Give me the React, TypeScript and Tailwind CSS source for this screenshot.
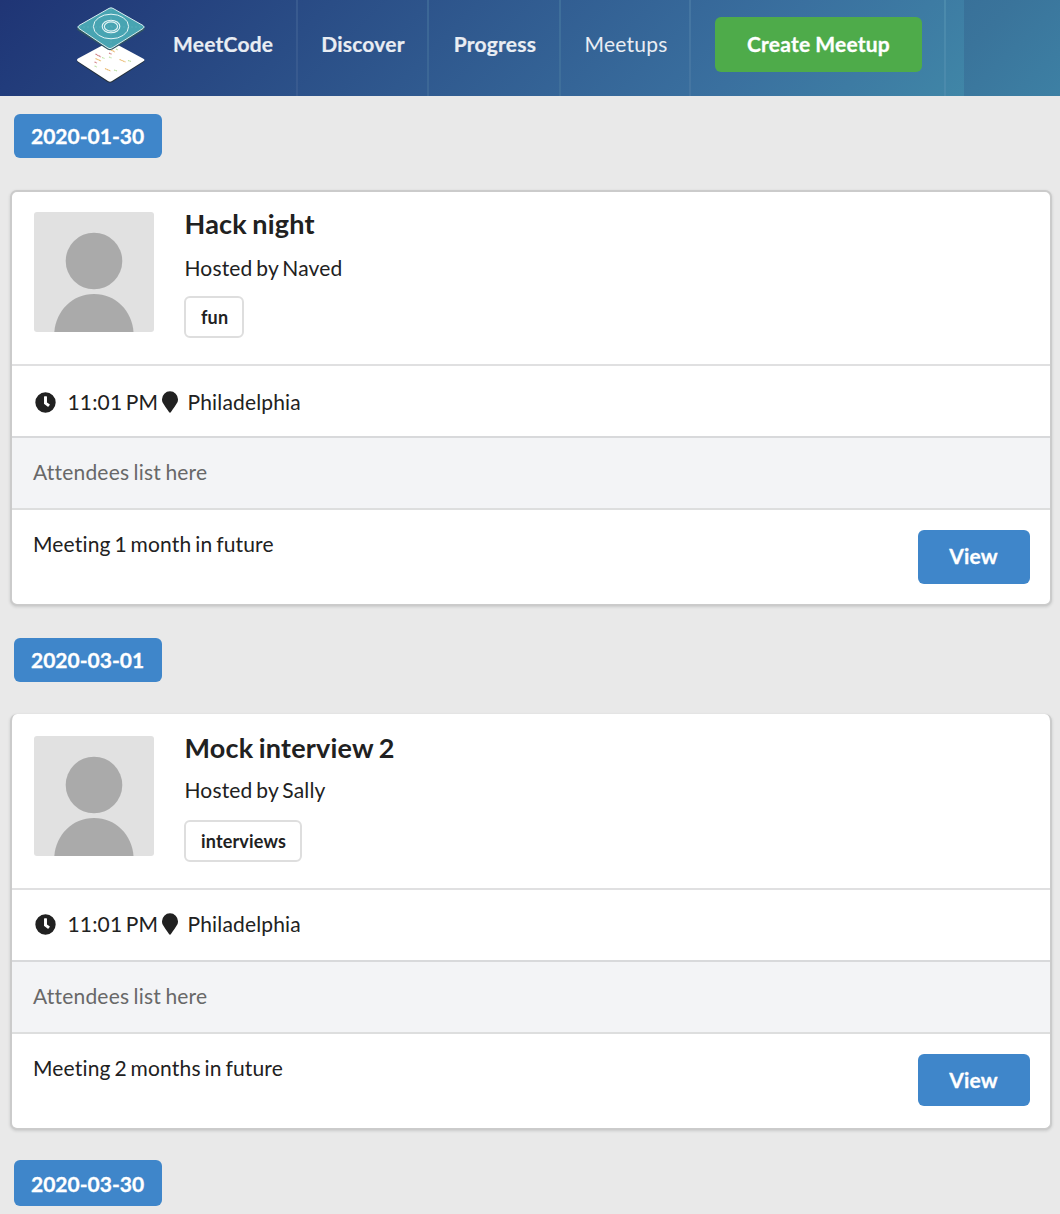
import React from "react";

type Meetup = {
  date: string;
  title: string;
  host: string;
  tag: string;
  description: string;
  cardClass: string;
  hostClass: string;
  timeClass: string;
  viewClass: string;
};

const meetups: Meetup[] = [
  {
    date: "2020-01-30",
    title: "Hack night",
    host: "Naved",
    tag: "fun",
    description: "Meeting 1 month in future",
    cardClass: "border-t-2",
    hostClass: "mt-[11px] mb-[16px]",
    timeClass: "pt-[2px]",
    viewClass: "h-[54px] pb-[2px]",
  },
  {
    date: "2020-03-01",
    title: "Mock interview 2",
    host: "Sally",
    tag: "interviews",
    description: "Meeting 2 months in future",
    cardClass: "border-t-0 pt-[2px]",
    hostClass: "mt-[9px] mb-[18px]",
    timeClass: "pb-[2px]",
    viewClass: "h-[52px]",
  },
];

function Logo() {
  return (
    <svg width="70" height="78" viewBox="0 0 70 78" fill="none">
      <path d="M34.500 34 L67 52.500 Q70 54 67 55.500 L36.500 75 Q34 76.500 31.500 75 L2 55.500 Q0 54 2 52.500Z" fill="#26323c" />
      <path d="M34.500 34 L67 51.500 Q70 53 67 54.500 L36 74 Q34 75.300 32 74 L2 54.500 Q0 53 2 51.500Z" fill="#fff" />
      <path d="M35 3 L67.500 20.500 Q70 22 67.500 23.500 L36.500 42.500 Q34 43.800 31.500 42.500 L2 23.500 Q0 22 2 20.500Z" fill="#315763" />
      <path d="M33 1.400 Q35 .2 37 1.400 L67 18.500 Q69.500 20 67 21.500 L36 41 Q34 42.300 32 41 L3 21.500 Q.5 20 3 18.500Z" fill="#48a4b2" stroke="#d9eef0" strokeWidth="1" />
      <path d="M3 20H67M35 2V41" stroke="#65b5bf" strokeWidth=".5" strokeDasharray="2 2" />
      <g stroke="#e4f5f6">
        <ellipse cx="35" cy="19.500" rx="17.600" ry="12.300" strokeWidth="1" />
        <ellipse cx="35" cy="19.500" rx="8.800" ry="6.300" strokeWidth="1.100" />
        <ellipse cx="35" cy="19.500" rx="6.600" ry="4.600" strokeWidth="1.100" />
      </g>
      <g strokeWidth="1.100" strokeDasharray="1.600 .3">
        <path d="M19.500 47l5.500 3M33 46l2.500 1.200M18.500 55l2.500 1" stroke="#ce7d83" />
        <path d="M19.500 51.500l5.500 2.500M43.500 52.500l6 2.500M29 61.500l5.500 2.500M35 43l4 2" stroke="#e8b86d" />
        <path d="M26 50.500l2.500 1M33 50l2.500 1M52 53.500l3 1M18.500 59l2.500 1M38 63l3 1M40 42l2 1" stroke="#b9df9e" />
      </g>
    </svg>
  );
}

function Avatar() {
  return (
    <svg className="h-[120px] w-[120px] shrink-0 rounded-[3px] bg-[#e1e1e1]" viewBox="0 0 120 120">
      <circle cx="60" cy="49" r="28.300" fill="#aaa" />
      <path d="M20.300 120C22 99 38 82 60 82S98 99 99.500 120Z" fill="#aaa" />
    </svg>
  );
}

function DateLabel({ children, className }: { children: React.ReactNode; className: string }) {
  return (
    <div className={`ml-[14px] flex w-[148px] items-center rounded-[6px] bg-[#3f86ca] pl-[17px] text-[21px] font-bold tracking-[0] text-white [-webkit-text-stroke:0.3px_#fff] ${className}`}>
      {children}
    </div>
  );
}

function MeetupCard({ meetup }: { meetup: Meetup }) {
  return (
    <article
      className={`mt-8 mr-[8px] ml-[10px] flex h-[416px] flex-col overflow-hidden rounded-[7px] border-x-2 border-b-2 border-[#cbcbcb] bg-white shadow-[0_1px_3px_rgba(34,36,38,0.16)] ${meetup.cardClass}`}
    >
      <div className="flex h-[172px] shrink-0 gap-[30.5px] pt-5 pl-[22px]">
        <Avatar />
        <div>
          <h2 className="h-[32px] text-[27px] leading-[23px] font-bold tracking-[0.18px] [word-spacing:-1.2px]">{meetup.title}</h2>
          <p className={`h-[25px] leading-[25px] ${meetup.hostClass}`}>Hosted by {meetup.host}</p>
          <span className="-ml-[0.5px] inline-flex h-[42px] items-center rounded-[6px] border-2 border-[#dedede] pr-[14px] pl-[15px] text-[18px] font-bold">
            {meetup.tag}
          </span>
        </div>
      </div>
      <div className={`flex h-[72px] shrink-0 items-center border-t-2 border-[#e0e0e1] pl-[23px] ${meetup.timeClass}`}>
        <svg width="21" height="21" viewBox="0 0 512 512" fill="currentColor">
          <path d="M256 8a248 248 0 1 0 0 496 248 248 0 0 0 0-496zm57.100 350.100L224.900 294a12 12 0 0 1-4.900-9.700V116a12 12 0 0 1 12-12h48a12 12 0 0 1 12 12v137.700l63.500 46.200a12 12 0 0 1 2.600 16.800l-28.200 38.800a12 12 0 0 1-16.800 2.600z" />
        </svg>
        <span className="ml-[11.5px] w-[94.5px] whitespace-nowrap [word-spacing:-2px]">11:01 PM</span>
        <svg width="16" height="22" viewBox="0 0 384 512" fill="currentColor">
          <path d="M172 502C27 291 0 269 0 192a192 192 0 0 1 384 0c0 77-27 99-172 310-10 14-31 14-40 0z" />
        </svg>
        <span className="ml-[9.5px]">Philadelphia</span>
      </div>
      <div className="flex h-[72px] shrink-0 items-center border-t-2 border-[#d8d9db] bg-[#f3f4f6] pb-[2px] pl-[21px] tracking-[0.2px] text-[#686868] [word-spacing:-1.2px]">
        Attendees list here
      </div>
      <div className="flex flex-1 items-start justify-between border-t-2 border-[#dddede] pt-[20px] pr-[20px] pl-[21px]">
        <p className="leading-[28px]">{meetup.description}</p>
        <button className={`w-[112px] rounded-[6px] bg-[#3f86ca] pr-[1px] font-bold text-white [-webkit-text-stroke:0.3px_#fff] ${meetup.viewClass}`}>View</button>
      </div>
    </article>
  );
}

export default function App() {
  return (
    <div className="h-[1214px] overflow-hidden bg-[#e9e9e9] font-['Lato',sans-serif] text-[21px] tracking-[0.16px] text-[#212121] [font-variant-ligatures:none] [word-spacing:-1.7px]">
      <header className="h-[96px] bg-[linear-gradient(135deg,#203575_0%,#213c7c_8%,#3a749b_88%,#3d80a4_100%)]">
        <nav className="ml-[10px] flex h-full w-[954px] bg-[linear-gradient(135deg,#1f3575_0%,#3a709f_76%,#4086a7_100%)] font-bold tracking-[0.22px] text-[#e9edf3]">
          <div className="flex w-[288px] items-center border-r-2 border-[#385a8f] pb-[8px]">
            <div className="mt-[4px] ml-[66px] h-[78px] w-[70px]"><Logo /></div>
            <span className="ml-[27px] [-webkit-text-stroke:0.2px_#e9edf3]">MeetCode</span>
          </div>
          <a className="flex w-[131px] items-center justify-center border-r-2 border-[#3c6796] pb-[8px] pl-[1px] [-webkit-text-stroke:0.2px_#e9edf3]">Discover</a>
          <a className="flex w-[132px] items-center justify-center border-r-2 border-[#3f6f9b] pb-[8px] pl-[2px] [-webkit-text-stroke:0.2px_#e9edf3]">Progress</a>
          <a className="flex w-[130px] items-center justify-center border-r-2 border-[#4576a2] pb-[8px] pl-[2px] font-normal">Meetups</a>
          <div className="flex w-[255px] items-center border-r-2 border-[#4b8aac] pb-[7px] pl-[24px]">
            <button className="h-[55px] w-[207px] rounded-[6px] bg-[#4eab4a] pb-[2px] text-white [-webkit-text-stroke:0.3px_#fff] [word-spacing:-0.5px]">Create Meetup</button>
          </div>
        </nav>
      </header>
      <main>
        {meetups.map((meetup, index) => (
          <section key={meetup.date}>
            <DateLabel className={index === 0 ? "mt-[18px] h-[44px]" : "mt-8 h-[44px]"}>{meetup.date}</DateLabel>
            <MeetupCard meetup={meetup} />
          </section>
        ))}
        <DateLabel className="mt-[30px] h-[46px] pt-[2px]">2020-03-30</DateLabel>
      </main>
    </div>
  );
}
